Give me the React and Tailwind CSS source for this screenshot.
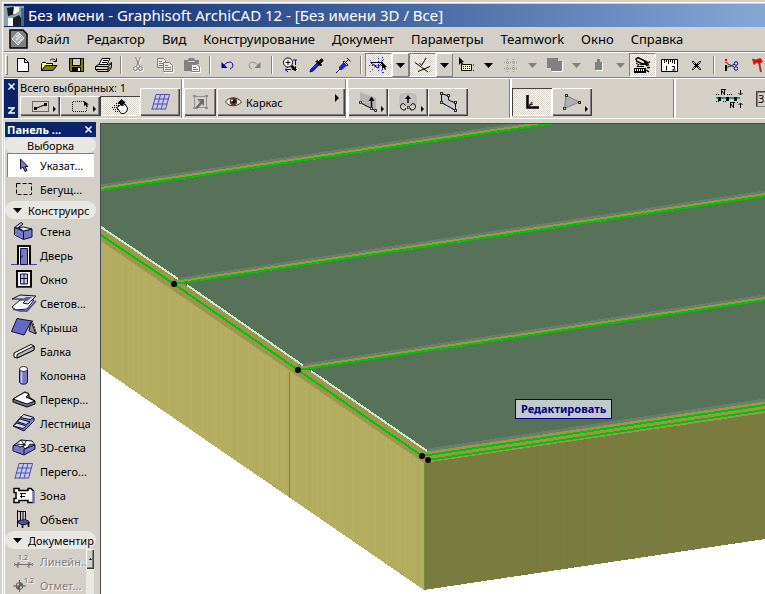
import React from 'react';
import clsx from 'clsx';

const RAISED = 'shadow-[inset_1px_1px_#fff,inset_-1px_-1px_#404040,inset_-2px_-2px_#808080]';
const PRESSED = 'bg-[repeating-conic-gradient(#fff_0_25%,#d4d0c8_0_50%)] bg-[length:2px_2px]';

const Icon = ({ w = 16, h = 16, className, children }) => (
    <svg width={w} height={h} viewBox={`0 0 ${w} ${h}`} className={clsx('block shrink-0', className)} fill="none" stroke="#000" aria-hidden="true">
        {children}
    </svg>
);

const ArrowDown = ({ color = '#000' }) => (
    <Icon w={9} h={5}><path d="M0 0h9L4.500 5z" fill={color} stroke="none" /></Icon>
);

// ---------- standard toolbar icons ----------
const icons = {
    new: (
        <Icon w={12} h={14}>
            <path d="M.5.5h7l4 4v9H.5z" fill="#fff" />
            <path d="M7.500.5v4h4" />
        </Icon>
    ),
    open: (
        <Icon w={17} h={14}>
            <path d="M.5 12.500v-7l1-1h3l1 1h6v2" fill="#ffff80" />
            <path d="M.5 12.500l4-5h11.500l-4 5z" fill="#808000" />
            <path d="M9 2.500c2-2 4-2 5.500 0M15.500.5v3h-3" />
        </Icon>
    ),
    save: (
        <Icon w={15} h={14}>
            <path d="M.5.5h14v13H1.500l-1-1z" fill="#808000" />
            <path d="M3.500 1v6.500h8V1" fill="#d4d0c8" />
            <path d="M3 9h9v4.500H3z" fill="#000" stroke="none" />
            <path d="M10 10v3" stroke="#fff" strokeWidth="2" />
        </Icon>
    ),
    print: (
        <Icon w={17} h={15}>
            <path d="M4 6.500l3-6h8l-3 6z" fill="#fff" />
            <path d="M8 2.500h5M7 4.500h5" />
            <path d="M.5 8.500l3-2h10l3-2v5l-3 4H3l-2.500-2z" fill="#d4d0c8" />
            <path d="M.5 8.500h12.500l3.500-3M.5 11.500h12.500l3-3M13 8.500v5" />
            <path d="M8 10h3" stroke="#e0c000" />
        </Icon>
    ),
    cut: (
        <Icon w={11} h={16}>
            <g stroke="#fff" transform="translate(1 1)"><path d="M2.500 0l4 9M7.500 0l-4 9" /><circle cx="2.500" cy="11.500" r="2" /><circle cx="7.500" cy="11.500" r="2" /></g>
            <g stroke="#808080"><path d="M2.500 0l4 9M7.500 0l-4 9" /><circle cx="2.500" cy="11.500" r="2" /><circle cx="7.500" cy="11.500" r="2" /></g>
        </Icon>
    ),
    copy: (
        <Icon w={17} h={15}>
            <g stroke="#808080" fill="#e8e6e0">
                <path d="M.5.500h6l2 2v7h-8z" />
                <path d="M6.500 4.500h6l3 3v6h-9z" />
            </g>
            <path d="M2 3.500h3M2 5.500h4M2 7.500h4M8 7.500h3M8 9.500h6M8 11.500h6" stroke="#808080" />
            <path d="M16.500 8v6.500h-9" stroke="#fff" />
        </Icon>
    ),
    paste: (
        <Icon w={17} h={15}>
            <path d="M0 2h4l1-2h5l1 2h4v4H7v7H0z" fill="#808080" stroke="none" />
            <path d="M4 3.500h7" stroke="#d4d0c8" />
            <path d="M7.500 6.500h5l3 2v5h-8z" fill="#f0eeea" stroke="#808080" />
            <path d="M9 9.500h3M9 11.500h5" stroke="#808080" />
            <path d="M16.500 9v5.500h-9" stroke="#fff" />
        </Icon>
    ),
    undo: (
        <Icon w={13} h={9}>
            <path d="M2 5.500C5 1 9.500 0 11.500 2.500c1 2.500 0 4.500-2.500 5.500" stroke="#000090" />
            <path d="M.5 1v6h6z" fill="#000090" stroke="none" />
        </Icon>
    ),
    redo: (
        <Icon w={13} h={9}>
            <path d="M11 5.500C8 1 3.500 0 1.500 2.500c-1 2.500 0 4.500 2.500 5.500" stroke="#909090" />
            <path d="M12.500 1v6h-6z" fill="#808080" stroke="none" />
        </Icon>
    ),
    zoom: (
        <Icon w={16} h={16}>
            <path d="M4 12.500h11M13.500 3v11M11 3h4M6 15l-3-2.500L6 10" stroke="#0000e0" strokeDasharray="5 1" />
            <circle cx="6" cy="5.500" r="4.500" fill="#fff" />
            <path d="M3.500 5.500h5M6 3v5" />
            <path d="M9.500 9l4 4" strokeWidth="2.500" />
        </Icon>
    ),
    dropper: (
        <Icon w={15} h={15}>
            <path d="M1 14l1-3 6-6 2 2-6 6z" fill="#2020ff" stroke="#000070" />
            <path d="M7 3.500l4.500 4.500 1-1-1-1.500 2.500-2.500c.5-1-1-2.500-2-2L9.500 3.500 8 2.500z" fill="#000" />
        </Icon>
    ),
    syringe: (
        <Icon w={15} h={15}>
            <path d="M0 15l4-4" />
            <path d="M3.500 11.500v-2.500l4-4 2.500 2.500-4 4z" fill="#2020ff" stroke="#202080" />
            <path d="M7 4l1-1 4 4-1 1zM9 5l4-4M11 0l3.500 3.500" fill="#fff" />
        </Icon>
    ),
    guides: (
        <Icon w={19} h={17}>
            <path d="M1 3l14 13M1 15L15 2M13.500 0v17M9.500 1v14M0 8.500h18" stroke="#0000ff" strokeDasharray="1 2" />
            <path d="M1.500 5.500h12l-5 5.500z" />
            <path d="M13 5v7l1.500-1.500 1.500 2.500 1-.5-1-2.500h2z" fill="#000" stroke="none" />
        </Icon>
    ),
    snap: (
        <Icon w={16} h={15}>
            <path d="M0 4.500L13 14M3 13.500L15 8.500M4.500 5l2 2.500L11 0" />
        </Icon>
    ),
    tracker: (
        <Icon w={18} h={16}>
            <path d="M1 0v8l2-2 2 3 1-1-2-3h2z" fill="#000" stroke="none" />
            <path d="M3.500 7.500h10v6h-10z" fill="#ffffc0" />
            <path d="M5 9.500h7M5 11.500h7" strokeDasharray="1 1" />
            <path d="M15 8h2M15 13.500h2" strokeDasharray="1 1" />
        </Icon>
    ),
    grid: (
        <Icon w={13} h={13}>
            <path d="M3.500 0v13M9.500 0v13M0 3.500h13M0 9.500h13" stroke="#a0a0a0" strokeDasharray="1 1" strokeWidth="1.500" />
        </Icon>
    ),
    squares: (
        <Icon w={16} h={14}>
            <path d="M5 4h11v10H5z" fill="#fff" stroke="none" />
            <path d="M0 0h11v10H0zM4 3h11v10H4z" fill="#808080" stroke="none" />
        </Icon>
    ),
    bottle: (
        <Icon w={8} h={12}>
            <path d="M7.500 4v7.500H1" stroke="#fff" />
            <path d="M2 0h3v3h2v8H0V3h2z" fill="#808080" stroke="none" />
        </Icon>
    ),
    suspend: (
        <Icon w={17} h={16}>
            <path d="M2 2l2-1.500L13 5l-1 2.500-3-.5-6-2.500zM4 9l8-3M10 4.500l3 2 3-2" strokeWidth="1.500" />
            <path d="M2 6.500l3 1-2 2h7" fill="#fff" />
            <path d="M0 11h12v5H0z" fill="#000" stroke="none" />
            <path d="M1 13h10" stroke="#fff" strokeDasharray="1 1" strokeWidth="2" />
            <path d="M13 10.500h3M12 13l3 2M12 8.500l3-1" strokeWidth="1.500" />
        </Icon>
    ),
    ruler: (
        <Icon w={17} h={13}>
            <path d="M.5.5h16v12H.5z" fill="#fff" />
            <path d="M3.500 1v3M5.500 1v2M7.500 1v4M9.500 1v2M11.500 1v3M13.500 1v4M5.500 7v4.500M11 7.500h2.500v2L11.500 11h3" />
        </Icon>
    ),
    cross: (
        <Icon w={9} h={9}>
            <path d="M0 .5h1.500l3 3 3-3H9M0 8.500h1.500l3-3 3 3H9M.5 1.500l3 3-3 3M8.500 1.500l-3 3 3 3" />
            <path d="M3 3h3v3H3z" fill="#000" stroke="none" />
        </Icon>
    ),
    trim: (
        <Icon w={14} h={13}>
            <path d="M1 0v2M1 3v1" stroke="#f00000" strokeWidth="2" />
            <path d="M1 6v6" strokeWidth="2" />
            <path d="M2 4.500l7 3.500M2 8.500l7-3" stroke="#202020" />
            <circle cx="11" cy="4.500" r="1.800" stroke="#0000a0" />
            <circle cx="11" cy="9.500" r="1.800" stroke="#0000a0" />
        </Icon>
    ),
    axe: (
        <Icon w={14} h={15}>
            <path d="M7 4l2 10" stroke="#904020" strokeWidth="2" />
            <path d="M.5 1l3 1 5-1.500 2 3-3 2-3-1-2.500 2z" fill="#f00000" stroke="#c03020" />
        </Icon>
    ),
};

const ToolButton = ({ icon, label, pressed }) => (
    <button
        aria-label={label}
        className={clsx(
            'flex h-6 w-[27px] shrink-0 items-center justify-center',
            pressed && [PRESSED, 'border border-[#808080] border-r-white border-b-white'],
        )}
    >
        {icons[icon]}
    </button>
);

const DropButton = ({ label, disabled, framed }) => (
    <button
        aria-label={label}
        disabled={disabled}
        className={clsx('flex h-6 w-[17px] shrink-0 items-center justify-center', framed && 'border border-white border-r-[#808080] border-b-[#808080]')}
    >
        <ArrowDown color={disabled ? '#808080' : '#000'} />
    </button>
);

const Separator = () => (
    <div className="flex h-[18px] w-2 shrink-0 justify-center">
        <div className="w-0.5 border-l border-[#808080] border-r border-r-white" />
    </div>
);

// ---------- info box icons ----------
const paletteIcons = {
    marqueeA: (
        <Icon w={17} h={11}>
            <path d="M.5.5h16v10H.5z" strokeDasharray="1 1" />
            <path d="M3.500 7.500l10-4" />
            <path d="M2 6h3v3H2zM12 2h3v3h-3z" fill="#000" stroke="none" />
        </Icon>
    ),
    marqueeB: (
        <Icon w={17} h={11}>
            <path d="M12 .5H.5v10h14V5" strokeDasharray="1 1" />
            <path d="M12 0v5l1.500-1 1.500 2 1-.5-1-2h2z" fill="#000" stroke="none" />
        </Icon>
    ),
    pour: (
        <Icon w={16} h={15}>
            <path d="M0 8.500h8M1 10.500h8M3 12.500h6M2 6.500h6M4 4.500h3" strokeDasharray="1 1" />
            <path d="M5 8.500l4-3 2 1 2-1.500 2.500 4-.5 3-3 2.500H9z" fill="#fff" />
            <path d="M9.500 0l4 3.500-4 3.500L6 3.500z" fill="#000" stroke="none" />
        </Icon>
    ),
    curtain: (
        <Icon w={19} h={16}>
            <path d="M5 1h13l-4 14H1z" fill="#c8c8f0" stroke="none" />
            <path d="M5 .5h13.500M4 5h13.500M2 10h14M.5 15h14M5 .5L1 15.500M9.500.5L5.500 15.500M14 .5l-4 15M18.500.5l-4 15" stroke="#5050a8" />
        </Icon>
    ),
    transform: (
        <Icon w={15} h={14}>
            <path d="M1.500 1.500h12v11h-12z" stroke="#909090" />
            <path d="M2 13l5-6-3-3h7v7L9 9l-5 5z" fill="#707070" stroke="none" />
            <path d="M0 0h3v2H0zM12 0h3v2h-3zM0 12h3v2H0zM12 12h3v2h-3z" fill="#909090" stroke="none" />
        </Icon>
    ),
    eye: (
        <Icon w={17} h={12}>
            <path d="M.5 6C4 .5 12 .5 16.500 6 12 11 4 11 .5 6z" fill="#fff" stroke="#3a2410" />
            <circle cx="8.500" cy="5.500" r="3.800" fill="#5a3818" stroke="none" />
            <circle cx="8.500" cy="5.500" r="1.800" fill="#000" stroke="none" />
            <circle cx="7" cy="4.500" r="1" fill="#fff" stroke="none" />
        </Icon>
    ),
    shear: (
        <Icon w={18} h={20}>
            <path d="M1 0l16 6v13L1 10z" fill="#b4b4b4" stroke="none" />
            <path d="M1 10.500l16 8.500" />
            <path d="M12.500 16V8" strokeWidth="1.500" />
            <path d="M12.500 4.500L9.500 9h6z" fill="#000" stroke="none" />
            <path d="M0 9h3v3H0zM11 15h3v3h-3zM15 17h3v3h-3z" fill="#404040" stroke="none" />
            <path d="M1 10h1v1H1zM12 16h1v1h-1zM16 18h1v1h-1z" fill="#fff" stroke="none" />
        </Icon>
    ),
    revolve: (
        <Icon w={18} h={18}>
            <path d="M1 3v9h16V3c-2-3-14-3-16 0z" fill="#c4c4c4" stroke="#b0b0b0" />
            <path d="M9 10V5" strokeWidth="1.500" />
            <path d="M9 2L6 6h6z" fill="#000" stroke="none" />
            <path d="M4.500 10.500C.5 10.500.5 16.500 4.500 17h1.500l1-2M13.500 10.500c4 0 4 6 0 6.500H12l-1-2M4.500 10.500l2 2M13.500 10.500l-2 2" />
            <path d="M8 13h3v3H8z" fill="#404040" stroke="none" />
            <path d="M9 14h1v1H9z" fill="#fff" stroke="none" />
        </Icon>
    ),
    slab: (
        <Icon w={17} h={20}>
            <path d="M1.500 1.500l7 2.500v4l7 3v7.500l-14-8z" fill="#c4c8cc" />
            <path d="M0 0h3v3H0zM7 2h3v3H7zM14 9h3v3h-3zM14 17h3v3h-3zM0 9h3v3H0z" fill="#303030" stroke="none" />
            <path d="M1 1h1v1H1zM8 3h1v1H8zM15 10h1v1h-1zM15 18h1v1h-1zM1 10h1v1H1z" fill="#fff" stroke="none" />
        </Icon>
    ),
    corner: (
        <Icon w={13} h={14}>
            <path d="M1.500 0v12.500H13" strokeWidth="2.500" />
            <path d="M6 7l-2.500 4M3 10l4-1" />
        </Icon>
    ),
    triangle: (
        <Icon w={18} h={16}>
            <path d="M3 1.500L16.500 8 1.500 14.500z" fill="#b0b0b0" stroke="#808080" />
            <path d="M2 0h3v3H2zM15 7h3v3h-3zM0 13h3v3H0z" fill="#303030" stroke="none" />
            <path d="M3 1h1v1H3zM16 8h1v1h-1zM1 14h1v1H1z" fill="#fff" stroke="none" />
        </Icon>
    ),
    linked: (
        <Icon w={28} h={20}>
            <path d="M0 9h24" stroke="#00a0b0" strokeWidth="2" />
            <path d="M3.500 8v4M11.500 8v4M19.500 8v4" strokeWidth="3" />
            <path d="M5.500 1v5M8.500 1v5M5 .5h5M6 2l2 3M14.500 14v5M17.500 14v5M14 13.500h5M15 15l2 3" />
            <path d="M24.500 1v5M22.500 4l2 2 2-2M24.500 19v-5M22.500 16l2-2 2 2" />
            <path d="M0 5.500h4M11 5.500h5M0 12.500h3M7 12.500h4M21 13.500h2" strokeDasharray="1 1" />
        </Icon>
    ),
};

const PaletteButton = ({ icon, label, menu, pressed, className }) => (
    <button aria-label={label} className={clsx('relative flex w-10 shrink-0 items-center justify-center', pressed ? [PRESSED, 'shadow-[inset_1px_1px_#404040,inset_-1px_-1px_#fff]'] : RAISED, className)}>
        {paletteIcons[icon]}
        {menu && (
            <Icon w={3} h={6} className="absolute right-1 bottom-1"><path d="M0 0l3 3-3 3z" fill="#000" stroke="none" /></Icon>
        )}
    </button>
);

const PaletteDivider = () => (
    <div className="w-[3px] shrink-0 border-l border-[#808080] bg-white" />
);

// ---------- toolbox icons ----------
const INK = '#101030';
const FILL = '#7878c8';
const LIGHT = '#c8c8f0';

const toolIcons = {
    pointer: (
        <Icon w={10} h={15}>
            <path d="M1.500 1v10l2.500-2 2 4.500 2-1-2-4h3z" fill={FILL} stroke={INK} />
        </Icon>
    ),
    marquee: (
        <Icon w={16} h={12}>
            <path d="M.5.5h15v11H.5z" strokeDasharray="4 2" />
        </Icon>
    ),
    wall: (
        <Icon w={19} h={18}>
            <path d="M.5 5.500L9 9l9-2v8l-8.500 2.500L.5 13z" fill={FILL} stroke={INK} />
            <path d="M.5 5.500L7 .5l2 1.500L4.500 5.500l6 2z" fill={LIGHT} stroke={INK} />
            <path d="M4.500 5.500l5-.5 8.500 2-8.500 2z" fill="#e8e8ff" stroke={INK} />
            <path d="M9.500 9v8" stroke={INK} />
        </Icon>
    ),
    door: (
        <Icon w={26} h={20}>
            <path d="M0 19.500h26" stroke="#4040a0" />
            <path d="M7 19.500V1h12v18.500" fill="#fff" strokeWidth="2" />
            <path d="M9.500 3.500h7v16h-7z" fill={FILL} stroke={INK} />
            <path d="M11 10.500v2" stroke="#000" />
        </Icon>
    ),
    window: (
        <Icon w={16} h={18}>
            <path d="M1 1h14v16H1z" fill="#fff" strokeWidth="2" />
            <path d="M4.500 4h7v10h-7z" fill={LIGHT} stroke={INK} />
            <path d="M8 4v10M4 8.500h8" stroke={INK} />
            <path d="M0 17.500h16" stroke="#4040a0" />
        </Icon>
    ),
    skylight: (
        <Icon w={26} h={18}>
            <path d="M1 13l8-7h14l-7 9-11 1z" fill="#fff" stroke={INK} />
            <path d="M2 15l7 2h7l9-10" stroke="#4040a0" strokeWidth="1.500" />
            <path d="M1 5l8-4 16 1-8 8-5-1 3-3-4-1z" fill="#d8d8e8" stroke={INK} />
            <path d="M10 6l5-3h6l-5 4z" fill="#606088" stroke="none" />
        </Icon>
    ),
    roof: (
        <Icon w={26} h={18}>
            <path d="M20 3l5 13-7-3z" fill="#909090" stroke={INK} />
            <path d="M6 .5L20.500 3 13 17 .5 13.500z" fill="#6868c8" stroke={INK} />
            <path d="M20.500 2.500l4.500 13" stroke="#303030" strokeWidth="2" strokeDasharray="2 1" />
        </Icon>
    ),
    beam: (
        <Icon w={22} h={15}>
            <path d="M1 9L18 .5l3 1.500v4L4 14l-3-1z" fill="#fff" />
            <path d="M4 10.500L21 2v4L4 14z" fill="#b8b8b8" />
        </Icon>
    ),
    column: (
        <Icon w={9} h={19}>
            <path d="M.5 3v13c1 3 7 3 8 0V3z" fill={FILL} stroke={INK} />
            <path d="M2.500 5v12" stroke={LIGHT} strokeWidth="1.500" />
            <ellipse cx="4.500" cy="3" rx="4" ry="2.500" fill="#fff" stroke="#303030" />
        </Icon>
    ),
    slab: (
        <Icon w={24} h={17}>
            <path d="M1 8l12-7 4 2v3l6 4v3l-8 3L1 11z" fill="#707088" />
            <path d="M1 8l12-7 4 2-3 3 9 4-8 3z" fill="#fff" />
        </Icon>
    ),
    stair: (
        <Icon w={24} h={18}>
            <path d="M1 12l7-8 4-3 10 3v3L12 17z" fill={FILL} stroke={INK} />
            <path d="M8 3.500l4-3 10 3-4 2zM5 7.500l3-2.500 10 3-4 2.500zM1 12l4-3 9 3-3 2.500z" fill="#d8d8f0" stroke={INK} />
        </Icon>
    ),
    mesh: (
        <Icon w={24} h={17}>
            <path d="M1 7l8-6 14 5v4L12 16 1 12z" fill={FILL} stroke={INK} />
            <path d="M1 7l4-1 3 2 3-1 2 3 3-2 2-3 5 1-3-4L9 1z" fill="#fff" stroke={INK} />
            <path d="M5 5l9 1M9 1l4 6M14 2l-3 6M12 16v-6l11-4" stroke={INK} />
        </Icon>
    ),
    curtain: paletteIcons.curtain,
    zone: (
        <Icon w={22} h={17}>
            <path d="M6 1.500H1v4h2v6H1v4h5v-2h9v2h5.500V4L18 1.500h-3v2H6z" fill="#fff" strokeWidth="1.500" />
            <path d="M20.500 4v12" stroke="#7070c0" strokeWidth="2" />
            <path d="M8.500 6v5M7 6.500h6M7 9.500h5" />
        </Icon>
    ),
    object: (
        <Icon w={15} h={18}>
            <path d="M1.500 0v17M9.500 1v9M4.500 1v9M7 1v9M2 1.500h7" />
            <path d="M2.500 10.500l7-1 3.500 2v2L6.500 15l-4-2z" fill="#5050b0" stroke={INK} />
            <path d="M6.500 14v4M12.500 12v5" strokeWidth="1.500" />
        </Icon>
    ),
    dimension: (
        <Icon w={20} h={15}>
            <path d="M1 10.500h17M4 8v6M15 8v6M2.500 12.500l3-4M13.500 12.500l3-4M1 9l-1 1.500L1 12M18 9l1 1.500-1 1.500" stroke="#707070" />
            <text x="4" y="6" fontSize="7" fontFamily="Noto Sans" fill="#606060" stroke="none">1.2</text>
        </Icon>
    ),
    level: (
        <Icon w={22} h={16}>
            <circle cx="6.500" cy="9" r="3.500" stroke="#606060" />
            <path d="M6.500 9V5.500A3.500 3.500 0 0 1 10 9zM6.500 9v3.500A3.500 3.500 0 0 1 3 9z" fill="#606060" stroke="none" />
            <path d="M0 9h13M6.500 3v12" stroke="#606060" />
            <text x="11" y="6" fontSize="7" fontFamily="Noto Sans" fill="#606060" stroke="none">1.2</text>
        </Icon>
    ),
};

const tools = [
    ['wall', 'Стена'],
    ['door', 'Дверь'],
    ['window', 'Окно'],
    ['skylight', 'Светов...'],
    ['roof', 'Крыша'],
    ['beam', 'Балка'],
    ['column', 'Колонна'],
    ['slab', 'Перекр...'],
    ['stair', 'Лестница'],
    ['mesh', '3D-сетка'],
    ['curtain', 'Перего...'],
    ['zone', 'Зона'],
    ['object', 'Объект'],
];

const Tool = ({ icon, label, active, disabled }) => (
    <button
        disabled={disabled}
        className={clsx(
            'flex h-6 w-full items-center text-left whitespace-nowrap',
            disabled && 'text-[#808080] [text-shadow:1px_1px_#fff]',
            active && 'bg-white shadow-[inset_1px_1px_#808080]',
        )}
    >
        <span className="flex w-[33px] shrink-0 justify-center">{toolIcons[icon]}</span>
        {label}
    </button>
);

const SectionHeader = ({ children, open }) => (
    <button className={clsx('flex w-full shrink-0 items-center rounded-full bg-[#e9e7e2] whitespace-nowrap', open ? 'h-[18px] gap-1.5 pl-2' : 'h-4 justify-center')}>
        {open && <ArrowDown />}
        {children}
    </button>
);

const Toolbox = () => (
    <aside className="flex w-[92px] shrink-0 flex-col border-l border-white">
        <div className="flex h-[15px] shrink-0 items-center justify-between bg-[#0a246a] px-0.5 font-bold text-white">
            <span>Панель ...</span>
            <button aria-label="Закрыть" className="p-0.5">
                <Icon w={7} h={7}><path d="M.5.5l6 6M6.500.5l-6 6" stroke="#fff" strokeWidth="1.500" /></Icon>
            </button>
        </div>
        <SectionHeader>Выборка</SectionHeader>
        <div className="px-0.5">
            <Tool icon="pointer" label="Указат..." active />
            <Tool icon="marquee" label="Бегущ..." />
        </div>
        <SectionHeader open>Конструирс</SectionHeader>
        <div className="px-0.5">
            {tools.map(([icon, label]) => <Tool key={label} icon={icon} label={label} />)}
        </div>
        <SectionHeader open>Документир</SectionHeader>
        <div className="flex pl-0.5">
            <div className="min-w-0 flex-1">
                <Tool icon="dimension" label="Линейн.." disabled />
                <Tool icon="level" label="Отмет..." disabled />
            </div>
            <div className="mr-0.5 w-2 bg-[#e9e7e2]">
                <button aria-label="Вверх" className={clsx('flex h-5 w-full items-center justify-center bg-[#d4d0c8]', RAISED)}>
                    <Icon w={3} h={2}><path d="M0 2h3L1.500 0z" fill="#000" stroke="none" /></Icon>
                </button>
            </div>
        </div>
    </aside>
);

// ---------- 3D window ----------
const Seam = ({ x1, y1, x2, y2 }) => (
    <g>
        <path d={`M${x1} ${y1 - 4}L${x2} ${y2 - 4}`} stroke="#668166" strokeWidth="3" />
        <path d={`M${x1} ${y1 - 1}L${x2} ${y2 - 1}`} stroke="#9c9450" strokeWidth="4" />
        <path d={`M${x1} ${y1}L${x2} ${y2}`} stroke="#00c400" strokeWidth="2" />
    </g>
);

const Scene = () => (
    <svg viewBox="101 124 664 470" preserveAspectRatio="xMinYMin slice" className="absolute inset-0 h-full w-full" shapeRendering="crispEdges" fill="none">
        <defs>
            <pattern id="light" width="23" height="600" patternUnits="userSpaceOnUse">
                <rect width="23" height="600" fill="#b4ad60" />
                <path d="M3.500 0v600M11.500 0v600" stroke="#b1aa5d" />
                <path d="M7.500 0v600M18.500 0v600" stroke="#b6b062" />
            </pattern>
            <pattern id="dark" width="31" height="600" patternUnits="userSpaceOnUse">
                <rect width="31" height="600" fill="#7a7b3e" />
                <path d="M4.500 0v600M19.500 0v600" stroke="#7d793e" />
                <path d="M9.500 0v600M26.500 0v600" stroke="#777a3c" />
            </pattern>
        </defs>
        {/* walls */}
        <path d="M101 230L424 452V590L101 368z" fill="url(#light)" />
        <path d="M424 452L765 402V539L424 590z" fill="url(#dark)" />
        <path d="M289.500 372V498" stroke="#5f8c38" />
        <path d="M424.500 463V590" stroke="#6d8c3c" />
        {/* roof and eaves */}
        <path d="M101 124H765V404L427 453L101 228z" fill="#587259" />
        <path d="M101 227L428 452L424 463L101 241z" fill="#9c9450" />
        <path d="M426 451L765 401V413L424 463z" fill="#9c9450" />
        <path d="M428 450L765 400" stroke="#668166" strokeWidth="3" />
        <Seam x1={101} y1={190} x2={765} y2={92} />
        <Seam x1={174} y1={284} x2={765} y2={196} />
        <Seam x1={298} y1={370} x2={765} y2={300} />
        <path d="M101 227L178 279M187 285L303 365.500M311 371L427 451" stroke="#c8ecc8" strokeWidth="2" />
        <path d="M101 235L174 284L298 370L422 456L765 405M428 460L765 410" stroke="#00c400" strokeWidth="2" />
        <g fill="#000" shapeRendering="auto">
            <circle cx="174" cy="284" r="3" />
            <circle cx="298" cy="370" r="3" />
            <circle cx="422" cy="456" r="3" />
            <circle cx="428" cy="460" r="3" />
        </g>
    </svg>
);

const menus = ['Файл', 'Редактор', 'Вид', 'Конструирование', 'Документ', 'Параметры', 'Teamwork', 'Окно', 'Справка'];

const App = () => {
    return (
        <div className="flex h-screen flex-col overflow-hidden bg-[#d4d0c8] pt-1 pl-1 font-['Noto_Sans','DejaVu_Sans',sans-serif] text-[11px] leading-none text-black shadow-[inset_2px_2px_#d4d0c8,inset_3px_3px_#fff]">
            <header className="flex h-[23px] shrink-0 items-center gap-1 bg-linear-to-r from-[#0a246a] to-[#84a8d6] text-[15px] whitespace-nowrap text-white">
                <Icon w={20} h={20}>
                    <rect width="20" height="20" fill="#88a4ac" stroke="none" />
                    <path d="M3 2l5-1 4 1-1 6-7 2z" fill="#101820" stroke="none" />
                    <path d="M10 1h5v4l-4 3H9zM4 12h5v8H4z" fill="#fff" stroke="none" />
                    <path d="M9 12l6-3 2 3v8H9z" fill="#182028" stroke="none" />
                    <path d="M17 2h3v18h-3z" fill="#506870" stroke="none" />
                </Icon>
                <h1>Без имени - Graphisoft ArchiCAD 12 - [Без имени 3D / Все]</h1>
            </header>

            <nav className="flex h-[25px] shrink-0 items-center border-b border-[#808080] pl-[5px] text-[13px] whitespace-nowrap">
                <Icon w={19} h={20}>
                    <path d="M1 1h13l4 4v14H1z" fill="#808080" strokeWidth="1.500" />
                    <path d="M9 3l6 6-6 7-6-6z" fill="#b0b0b0" stroke="#e0e0e0" />
                    <path d="M7 8l4-3M7 11l5-4M9 14l4-4" stroke="#fff" />
                </Icon>
                {menus.map((item) => <button key={item} className="pr-[9px] pl-2">{item}</button>)}
            </nav>

            <div className="flex h-[26px] shrink-0 items-center overflow-hidden border-t border-b border-t-white border-b-[#808080]">
                <div className="mx-px h-5 w-[3px] shrink-0 border border-white border-r-[#808080] border-b-[#808080]" />
                <ToolButton icon="new" label="Создать" />
                <ToolButton icon="open" label="Открыть" />
                <ToolButton icon="save" label="Сохранить" />
                <ToolButton icon="print" label="Печать" />
                <Separator />
                <ToolButton icon="cut" label="Вырезать" />
                <ToolButton icon="copy" label="Копировать" />
                <ToolButton icon="paste" label="Вставить" />
                <Separator />
                <ToolButton icon="undo" label="Отменить" />
                <ToolButton icon="redo" label="Повторить" />
                <Separator />
                <ToolButton icon="zoom" label="Увеличить" />
                <ToolButton icon="dropper" label="Пипетка" />
                <ToolButton icon="syringe" label="Шприц" />
                <Separator />
                <ToolButton icon="guides" label="Направляющие" pressed />
                <DropButton label="Варианты направляющих" framed />
                <ToolButton icon="snap" label="Привязка" pressed />
                <DropButton label="Варианты привязки" framed />
                <ToolButton icon="tracker" label="Трекер" />
                <DropButton label="Варианты трекера" />
                <ToolButton icon="grid" label="Сетка" />
                <DropButton label="Варианты сетки" disabled />
                <ToolButton icon="squares" label="Группы" />
                <DropButton label="Варианты групп" disabled />
                <ToolButton icon="bottle" label="Гравитация" />
                <DropButton label="Варианты гравитации" disabled />
                <ToolButton icon="suspend" label="Приостановить группирование" pressed />
                <ToolButton icon="ruler" label="Измерить" />
                <ToolButton icon="cross" label="Пересечение" />
                <Separator />
                <ToolButton icon="trim" label="Подрезать" />
                <ToolButton icon="axe" label="Разделить" />
            </div>

            <div className="flex h-[41px] shrink-0 overflow-hidden border-t border-b border-white">
                <div className="flex w-3.5 shrink-0 flex-col items-center justify-between bg-[#0a246a] py-1">
                    <Icon w={7} h={7}><path d="M.5.5l6 6M6.500.5l-6 6" stroke="#fff" strokeWidth="1.500" /></Icon>
                    <Icon w={7} h={7}><path d="M0 1h6L1 6h6" stroke="#fff" strokeWidth="1.500" /></Icon>
                </div>
                <div className="flex w-[122px] shrink-0 flex-col justify-between pt-1 pb-0.5 pl-0.5 whitespace-nowrap">
                    <span className="leading-[10px]">Всего выбранных: 1</span>
                    <div className="flex h-5">
                        <PaletteButton icon="marqueeA" label="Выбор бегущей рамкой" menu />
                        <PaletteButton icon="marqueeB" label="Бегущая рамка" menu />
                        <PaletteButton icon="pour" label="Быстрый выбор" pressed />
                    </div>
                </div>
                <div className="flex shrink-0 items-end pr-px pb-0.5">
                    <PaletteButton icon="curtain" label="Навесная стена" className="h-7" />
                </div>
                <PaletteDivider />
                <div className="flex shrink-0 items-end gap-px pb-0.5">
                    <button aria-label="Трансформация" className={clsx('flex h-7 w-8 items-center justify-center', RAISED)}>{paletteIcons.transform}</button>
                    <button className={clsx('flex h-7 w-[128px] items-center gap-1 pr-1.5 pl-2', RAISED)}>
                        {paletteIcons.eye}
                        Каркас
                        <Icon w={4} h={8} className="mb-2 ml-auto"><path d="M0 0l4 4-4 4z" fill="#000" stroke="none" /></Icon>
                    </button>
                </div>
                <PaletteDivider />
                <div className="flex w-[161px] shrink-0 items-end pb-0.5">
                    <PaletteButton icon="shear" label="Сдвиг" menu className="h-7" />
                    <PaletteButton icon="revolve" label="Вращение" menu className="h-7" />
                    <PaletteButton icon="slab" label="Контур" className="h-7" />
                </div>
                <PaletteDivider />
                <div className="flex w-[161px] shrink-0 items-end pb-0.5">
                    <PaletteButton icon="corner" label="Прямой угол" pressed className="h-7" />
                    <PaletteButton icon="triangle" label="Треугольник" menu className="h-7" />
                </div>
                <PaletteDivider />
                <div className="flex shrink-0 items-center gap-3 pl-10">
                    {paletteIcons.linked}
                    <input aria-label="Этаж" readOnly value="3" className="h-4 w-10 border border-[#808080] border-t-[#404040] border-l-[#404040] bg-[#d4d0c8] pl-px shadow-[inset_1px_1px_#808080]" />
                </div>
            </div>

            <main className="flex min-h-0 flex-1 pt-[3px]">
                <Toolbox />
                <section className="relative mt-px ml-1 min-w-0 flex-1 overflow-hidden border-t border-l border-[#484c50] bg-white">
                    <Scene />
                    <button className="absolute top-[275px] left-[414px] border border-[#000080] bg-[#c0c8d0] px-[5px] py-[3px] leading-3 font-bold text-[#000080]">
                        Редактировать
                    </button>
                </section>
            </main>
        </div>
    );
};

export default App;
